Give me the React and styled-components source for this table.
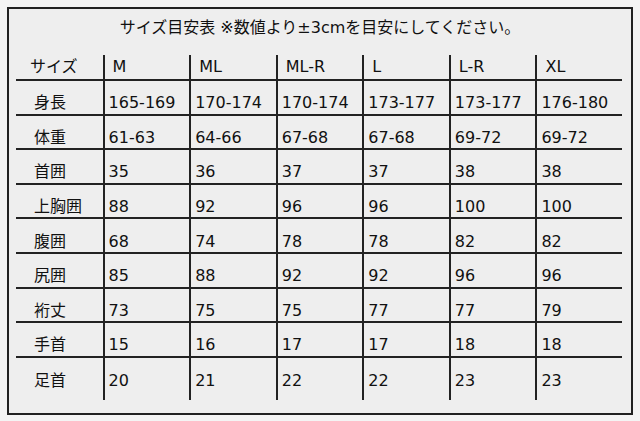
import React from 'react';
import styled, { createGlobalStyle } from 'styled-components';

const GlobalStyle = createGlobalStyle`
	html, body {
		margin: 0;
		padding: 0;
		background-color: #f4f4f4;
	}
	body {
		font-family: "DejaVu Sans", "Noto Sans CJK JP", sans-serif;
		color: #111;
	}
`;

const Frame = styled.div`
	box-sizing: border-box;
	width: 626px;
	height: 408px;
	margin: 7px;
	border: 2px solid #222;
	background-color: #eeeeee;
	padding: 9px 0 0 7px;
`;

const Title = styled.h1`
	margin: 0 0 17px -7px;
	font-size: 16px;
	font-weight: normal;
	line-height: 20px;
	text-align: center;
`;

const Grid = styled.div`
	display: grid;
	width: 606px;
	grid-template-columns: repeat(7, 1fr);
	grid-template-rows: 26px repeat(8, 34.6px) 42px;
`;

const Cell = styled.div`
	box-sizing: border-box;
	display: flex;
	align-items: center;
	font-size: 16px;
	line-height: 20px;
	white-space: nowrap;
	border-left: ${(p) => (p.$first ? 'none' : '2px solid #222')};
	border-bottom: ${(p) => (p.$last ? 'none' : '2px solid #222')};
	padding-top: ${(p) => (p.$head ? '0' : p.$last ? '4px' : '12px')};
	padding-left: ${(p) =>
		p.$first ? (p.$head ? '14px' : '18px') : p.$head ? '8px' : '4px'};
`;

const header = ['サイズ', 'M', 'ML', 'ML-R', 'L', 'L-R', 'XL'];

const rows = [
	['身長', '165-169', '170-174', '170-174', '173-177', '173-177', '176-180'],
	['体重', '61-63', '64-66', '67-68', '67-68', '69-72', '69-72'],
	['首囲', '35', '36', '37', '37', '38', '38'],
	['上胸囲', '88', '92', '96', '96', '100', '100'],
	['腹囲', '68', '74', '78', '78', '82', '82'],
	['尻囲', '85', '88', '92', '92', '96', '96'],
	['裄丈', '73', '75', '75', '77', '77', '79'],
	['手首', '15', '16', '17', '17', '18', '18'],
	['足首', '20', '21', '22', '22', '23', '23'],
];

const App = () => {
	return (
		<>
			<GlobalStyle />
			<Frame>
				<Title>サイズ目安表 ※数値より±3cmを目安にしてください。</Title>
				<Grid>
					{header.map((h, i) => (
						<Cell key={h} $head $first={i === 0}>
							{h}
						</Cell>
					))}
					{rows.map((row, r) =>
						row.map((v, i) => (
							<Cell key={`${r}-${i}`} $first={i === 0} $last={r === rows.length - 1}>
								{v}
							</Cell>
						))
					)}
				</Grid>
			</Frame>
		</>
	);
};

export default App;
